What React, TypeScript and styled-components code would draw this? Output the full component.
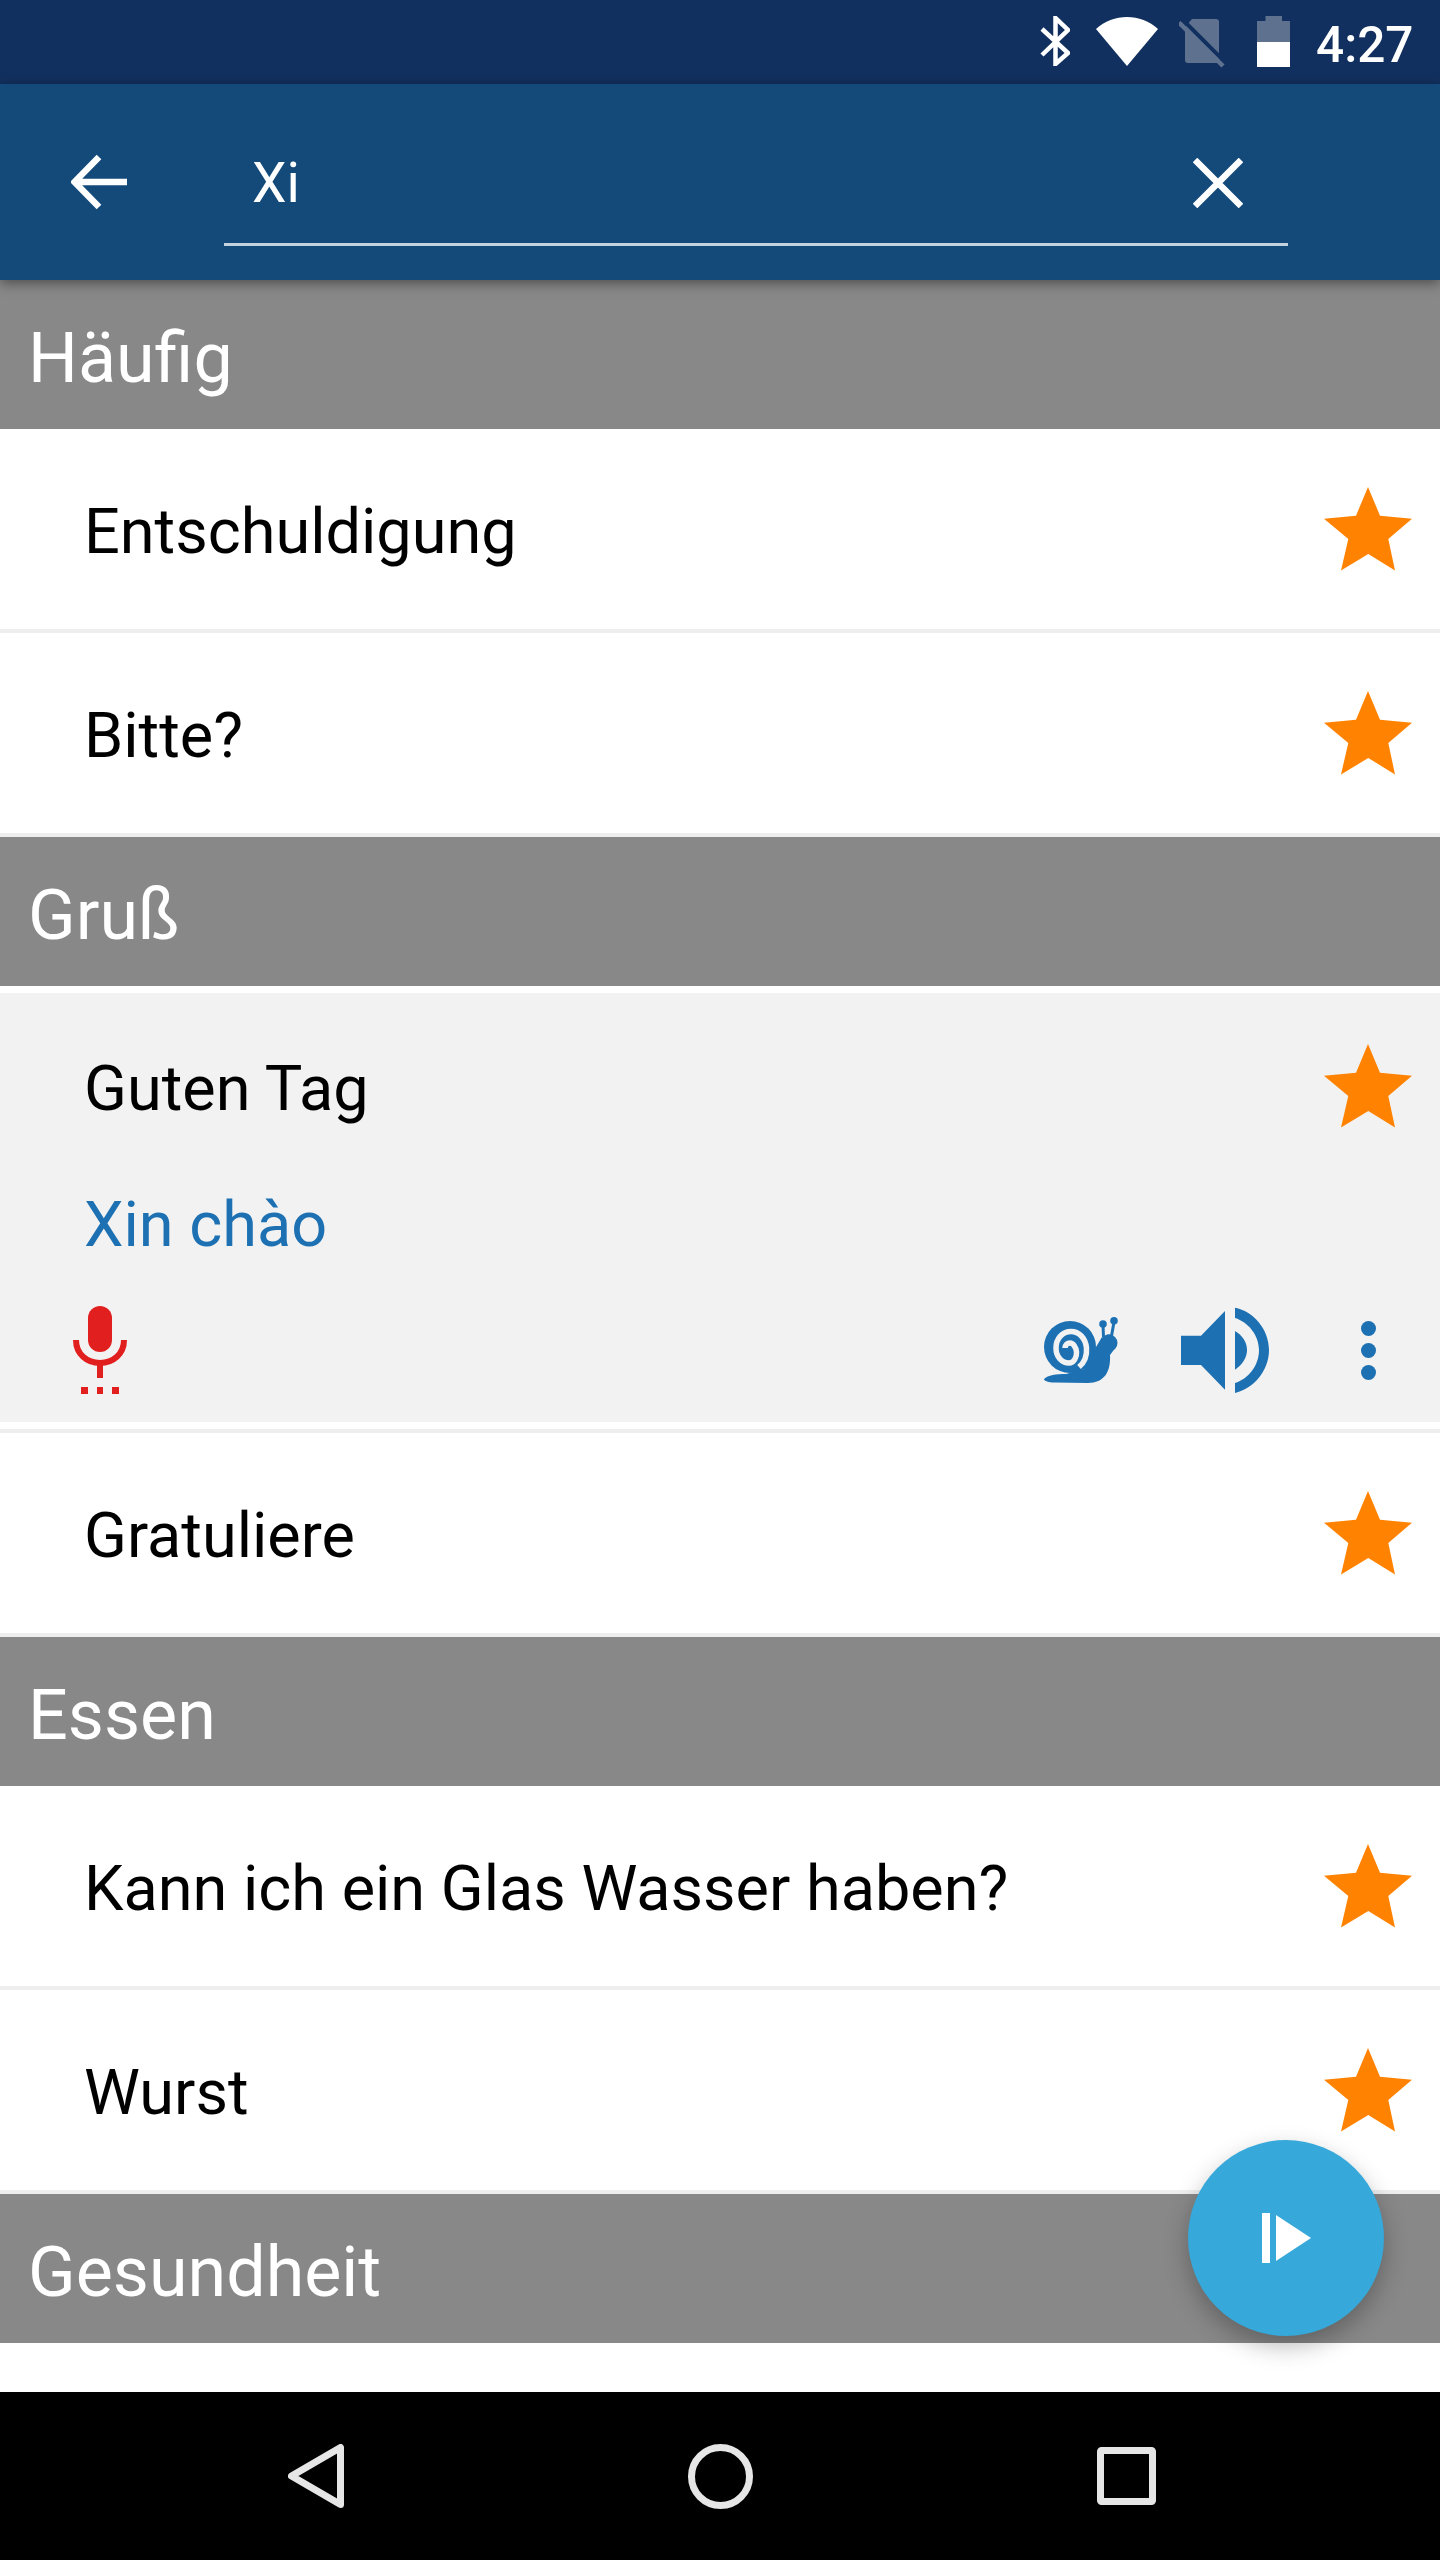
import React from 'react';
import styled, { createGlobalStyle } from 'styled-components';

const GlobalStyle = createGlobalStyle`
  html, body {
    margin: 0;
    padding: 0;
    background: #fff;
  }
  * {
    box-sizing: border-box;
  }
`;

const Page = styled.div`
  position: relative;
  width: 1440px;
  height: 2560px;
  display: flex;
  flex-direction: column;
  overflow: hidden;
  background: #fff;
  font-family: Roboto, 'Noto Sans', sans-serif;
`;

const StatusBar = styled.div`
  height: 84px;
  flex: none;
  display: flex;
  align-items: flex-start;
  background: #12305f;
  padding: 16px 0 0 1040px;
  svg {
    flex: none;
    display: block;
  }
`;

const Clock = styled.span`
  margin: 3px 0 0 26px;
  color: #fff;
  font-size: 49.5px;
  font-weight: 500;
  line-height: 52px;
`;

const AppBar = styled.div`
  position: relative;
  z-index: 2;
  height: 196px;
  flex: none;
  display: flex;
  align-items: center;
  padding-left: 71px;
  background: #144a7a;
  box-shadow: 0 3px 12px rgba(0, 0, 0, 0.45);
`;

const SearchField = styled.div`
  width: 1064px;
  height: 128px;
  margin: 0 0 0 97px;
  padding: 4px 45px 0 28px;
  display: flex;
  align-items: center;
  justify-content: space-between;
  border-bottom: 3px solid #c3d2df;
  color: #fff;
  font-size: 55px;
`;

const List = styled.div`
  flex: 1;
  min-height: 0;
  display: flex;
  flex-direction: column;
  overflow: hidden;
`;

const SectionHeader = styled.div`
  height: 149px;
  flex: none;
  display: flex;
  align-items: center;
  padding: 6px 0 0 28px;
  background: #888;
  color: #fff;
  font-size: 70px;
`;

const Row = styled.div`
  height: 204px;
  flex: none;
  display: flex;
  align-items: center;
  justify-content: space-between;
  padding: 0 28px 0 84px;
  background: #fff;
  border-bottom: 4px solid #eee;
  color: #000;
  font-size: 63px;
`;

const Phrase = styled.span`
  padding-top: 5px;
`;

const ExpandedWrap = styled.div`
  flex: none;
  padding: 7px 0;
  background: #fff;
  border-bottom: 4px solid #eee;
`;

const ExpandedRow = styled.div`
  height: 429px;
  display: flex;
  flex-direction: column;
  background: #f2f2f2;
  font-size: 63px;
`;

const ExpandedTop = styled.div`
  height: 185px;
  flex: none;
  display: flex;
  align-items: center;
  justify-content: space-between;
  padding: 0 28px 0 84px;
  color: #000;
`;

const Translation = styled.div`
  height: 88px;
  flex: none;
  display: flex;
  align-items: center;
  padding: 5px 0 0 84px;
  color: #1d71b3;
`;

const Actions = styled.div`
  flex: 1;
  display: flex;
  align-items: center;
  padding: 12px 64px 0 73px;
  svg {
    flex: none;
    display: block;
  }
`;

const SlowIcon = styled.svg`
  margin-left: auto;
`;

const SpeakerIcon = styled.svg`
  margin-left: 63px;
`;

const MoreIcon = styled.svg`
  margin-left: 92px;
`;

const Fab = styled.div`
  position: absolute;
  right: 56px;
  bottom: 224px;
  z-index: 3;
  width: 196px;
  height: 196px;
  display: flex;
  align-items: center;
  justify-content: center;
  border-radius: 50%;
  background: #36a8da;
  box-shadow: 0 10px 24px rgba(0, 0, 0, 0.28);
  svg {
    display: block;
    margin-left: 2px;
  }
`;

const NavBar = styled.div`
  height: 168px;
  flex: none;
  display: flex;
  align-items: center;
  gap: 344px;
  padding-left: 288px;
  background: #000;
`;

const Star = () => (
  <svg width="88" height="84" viewBox="0 0 88 84">
    <path
      fill="#ff8300"
      d="M44 0L56 28.7L88 31.7L64.3 52L71 83.4L44.3 67L17 83.4L24.3 52L0 31.7L32 28.7Z"
    />
  </svg>
);

const Bluetooth = () => (
  <svg width="30" height="50" viewBox="0 0 30 50">
    <path
      fill="none"
      stroke="#fff"
      strokeWidth="4.5"
      d="M2 13L28 37L15.5 48V2L28 14L2 39"
    />
  </svg>
);

const Wifi = () => (
  <svg width="62" height="50" viewBox="0 0 62 50" style={{ marginLeft: 26 }}>
    <path fill="#fff" d="M0 13C17 -3 45 -3 62 13L31 50Z" />
  </svg>
);

const NoSim = () => (
  <svg width="46" height="50" viewBox="0 0 46 50" style={{ marginLeft: 21, marginTop: 3 }}>
    <path fill="#5e7290" d="M13 0H37Q40 0 40 3V44H9Q6 44 6 41V8Z" />
    <path stroke="#12305f" strokeWidth="4" d="M3 0L46 43" />
    <path stroke="#5e7290" strokeWidth="4.5" d="M0 3.5L44 47" />
  </svg>
);

const Battery = () => (
  <svg width="33" height="51" viewBox="0 0 33 51" style={{ marginLeft: 32 }}>
    <path fill="#5e7290" d="M8.5 0H25V5H33V26H0V5H8.5Z" />
    <rect y="26" width="33" height="25" fill="#fff" />
  </svg>
);

const Mic = () => (
  <svg width="54" height="88" viewBox="0 0 54 88">
    <g fill="#e21f1f">
      <rect x="15" y="0" width="24" height="46" rx="12" />
      <rect x="24" y="58" width="6" height="14" />
      <rect x="8" y="81" width="7" height="7" />
      <rect x="24" y="81" width="6" height="7" />
      <rect x="39" y="81" width="7" height="7" />
    </g>
    <path
      fill="none"
      stroke="#e21f1f"
      strokeWidth="6"
      d="M3 34C3 48 14 57 27 57C40 57 51 48 51 34"
    />
  </svg>
);

const Snail = () => (
  <SlowIcon width="74" height="66" viewBox="0 0 74 66">
    <g fill="#1d71b3">
      <path d="M0 62C4 58 12 57 22 57L40 52L52 30L58 20L72 30L66 38C67 55 60 66 44 66L10 65.5C5 65.5 0 64 0 62Z" />
      <circle cx="26" cy="30" r="26" />
      <circle cx="65" cy="26" r="8.5" />
      <circle cx="59" cy="7" r="3.8" />
      <circle cx="70" cy="3.8" r="3.8" />
    </g>
    <path
      fill="none"
      stroke="#1d71b3"
      strokeWidth="3"
      d="M59 8L59.5 20M70 5L67.5 19H63"
    />
    <path
      fill="none"
      stroke="#f2f2f2"
      strokeWidth="5.5"
      d="M35 50C41 45 43 38 42.5 31C41.5 21 35 14.5 27 14.5C18 14.5 12 22 12 31C12 40 18 46 25 46C30 46 33 40 32.5 35C32 30 29 26 26 26C23 26 21 28 21 31"
    />
  </SlowIcon>
);

const Speaker = () => (
  <SpeakerIcon width="88" height="87" viewBox="0 0 88 87">
    <g fill="#1d71b3">
      <path d="M0 28.7H20L44 4V82.7L20 58H0Z" />
      <path d="M54 24C61 28 66 35 66 43C66 51 61 58 54 62.7Z" />
      <path d="M54 0.7C72 4 88 22 88 43C88 64 72 82 54 86V76C67 72 78 59 78 43C78 28 67 15 54 11Z" />
    </g>
  </SpeakerIcon>
);

const More = () => (
  <MoreIcon width="15" height="59" viewBox="0 0 15 59">
    <g fill="#1d71b3">
      <circle cx="7.5" cy="7.5" r="7.5" />
      <circle cx="7.5" cy="29.5" r="7.5" />
      <circle cx="7.5" cy="51.5" r="7.5" />
    </g>
  </MoreIcon>
);

const groups = [
  { title: 'Häufig', phrases: ['Entschuldigung', 'Bitte?'] },
  { title: 'Gruß', open: { phrase: 'Guten Tag', translation: 'Xin chào' }, phrases: ['Gratuliere'] },
  { title: 'Essen', phrases: ['Kann ich ein Glas Wasser haben?', 'Wurst'] },
  { title: 'Gesundheit', phrases: [] },
];

const App = () => {
  return (
    <Page>
      <GlobalStyle />
      <StatusBar>
        <Bluetooth />
        <Wifi />
        <NoSim />
        <Battery />
        <Clock>4:27</Clock>
      </StatusBar>
      <AppBar>
        <svg width="56" height="56" viewBox="0 0 56 56">
          <path
            fill="none"
            stroke="#fff"
            strokeWidth="6.5"
            d="M56 28H5M28 3L3.5 28L28 53"
          />
        </svg>
        <SearchField>
          Xi
          <svg width="50" height="50" viewBox="0 0 50 50">
            <path fill="none" stroke="#fff" strokeWidth="6.5" d="M2 2L48 48M48 2L2 48" />
          </svg>
        </SearchField>
      </AppBar>
      <List>
        {groups.map((group) => (
          <React.Fragment key={group.title}>
            <SectionHeader>{group.title}</SectionHeader>
            {group.open && (
              <ExpandedWrap>
                <ExpandedRow>
                  <ExpandedTop>
                    <Phrase>{group.open.phrase}</Phrase>
                    <Star />
                  </ExpandedTop>
                  <Translation>{group.open.translation}</Translation>
                  <Actions>
                    <Mic />
                    <Snail />
                    <Speaker />
                    <More />
                  </Actions>
                </ExpandedRow>
              </ExpandedWrap>
            )}
            {group.phrases.map((phrase) => (
              <Row key={phrase}>
                <Phrase>{phrase}</Phrase>
                <Star />
              </Row>
            ))}
          </React.Fragment>
        ))}
      </List>
      <Fab>
        <svg width="50" height="50" viewBox="0 0 50 50">
          <rect width="8" height="50" fill="#fff" />
          <path fill="#fff" d="M14 2L49 25L14 48Z" />
        </svg>
      </Fab>
      <NavBar>
        <svg width="56" height="64" viewBox="0 0 56 64">
          <path
            fill="none"
            stroke="#e6e6e6"
            strokeWidth="7"
            strokeLinejoin="round"
            d="M52.5 3.5V60.5L3.5 32Z"
          />
        </svg>
        <svg width="65" height="65" viewBox="0 0 65 65">
          <circle cx="32.5" cy="32.5" r="29" fill="none" stroke="#e6e6e6" strokeWidth="7" />
        </svg>
        <svg width="59" height="58" viewBox="0 0 59 58">
          <rect
            x="3.5"
            y="3.5"
            width="52"
            height="51"
            fill="none"
            stroke="#e6e6e6"
            strokeWidth="7"
            rx="1"
          />
        </svg>
      </NavBar>
    </Page>
  );
};

export default App;
